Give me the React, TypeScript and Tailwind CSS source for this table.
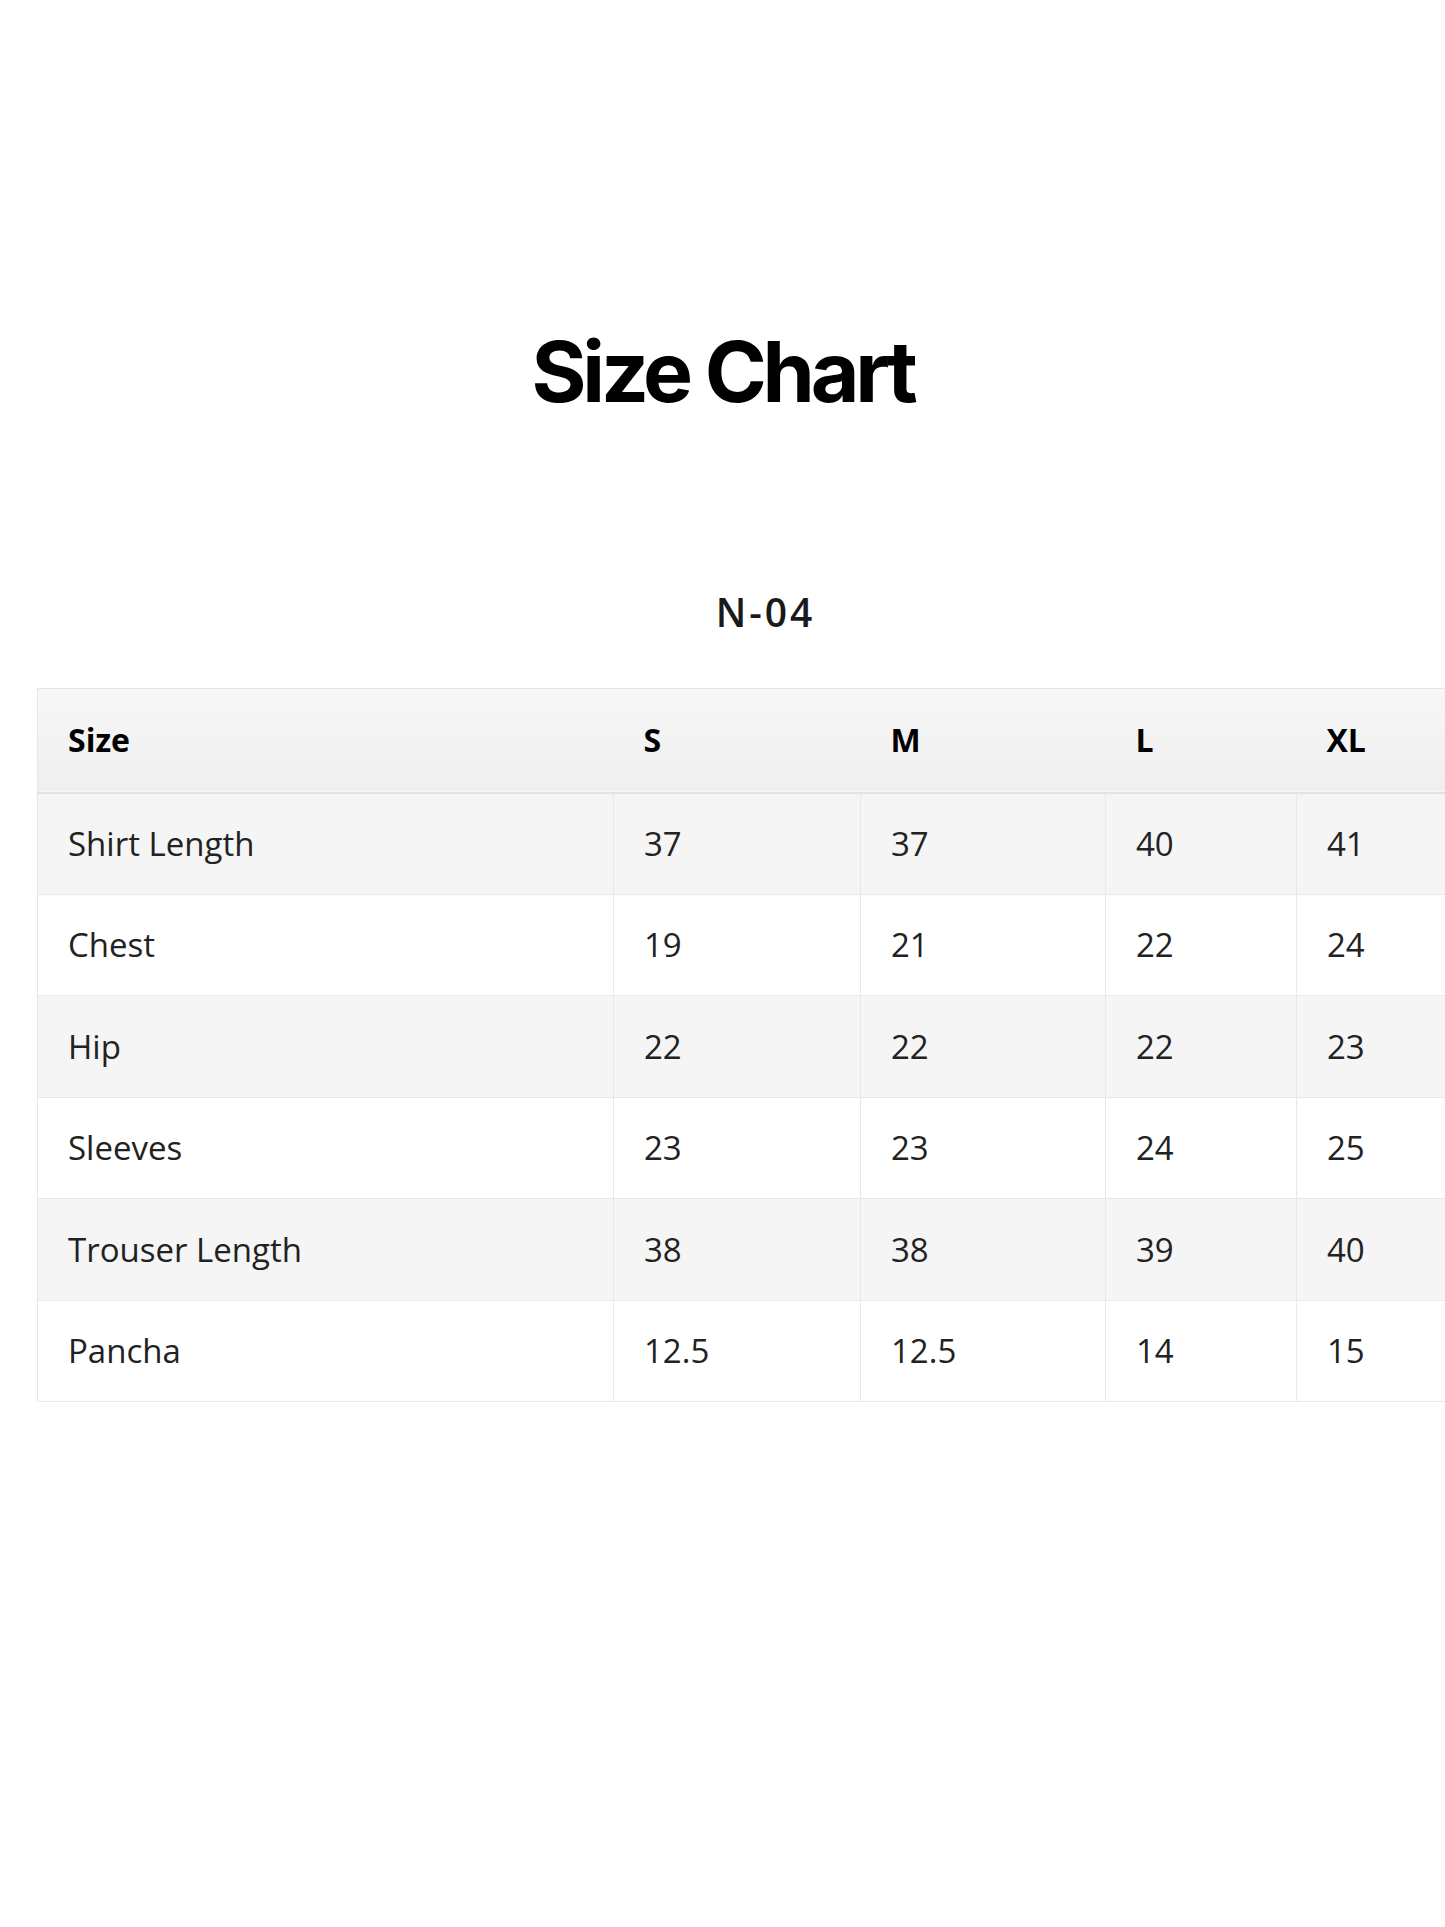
import React from "react";

const rows = [
    { label: "Shirt Length", values: ["37", "37", "40", "41"] },
    { label: "Chest", values: ["19", "21", "22", "24"] },
    { label: "Hip", values: ["22", "22", "22", "23"] },
    { label: "Sleeves", values: ["23", "23", "24", "25"] },
    { label: "Trouser Length", values: ["38", "38", "39", "40"] },
    { label: "Pancha", values: ["12.5", "12.5", "14", "15"] },
];

const sizes = ["S", "M", "L", "XL"];

export default function App() {
    return (
        <div className="min-h-[1927px] w-full overflow-hidden bg-white">
            <h1 className="pt-[322px] text-center text-[84px] font-bold leading-[100px] tracking-[-4.2px] text-black [font-family:Inter,sans-serif]">
                Size Chart
            </h1>

            <div className="mt-[162px] pl-[86px] text-center text-[39px] font-semibold leading-[56px] tracking-[3px] text-[#1a1a1a] [font-family:'Open_Sans',sans-serif]">
                N-04
            </div>

            <div className="mt-[48px] ml-[37px] w-[1480px] [font-family:'Open_Sans',sans-serif]">
                <table className="w-full table-fixed border-collapse border border-[#e6e6e6]">
                    <colgroup>
                        <col className="w-[576px]" />
                        <col className="w-[247px]" />
                        <col className="w-[245px]" />
                        <col className="w-[191px]" />
                        <col />
                    </colgroup>
                    <thead>
                        <tr className="h-[104px] bg-gradient-to-b from-[#f7f7f7] to-[#efefef] border-b-2 border-[#e2e2e2]">
                            <th className="pl-[30px] text-left text-[32px] font-bold text-black">Size</th>
                            {sizes.map((s) => (
                                <th key={s} className="pl-[30px] text-left text-[32px] font-bold text-black">
                                    {s}
                                </th>
                            ))}
                        </tr>
                    </thead>
                    <tbody>
                        {rows.map((row, i) => (
                            <tr
                                key={row.label}
                                className={
                                    "h-[101.5px] border-b border-[#e8e8e8] " +
                                    (i % 2 === 0 ? "bg-[#f5f5f5]" : "bg-white")
                                }
                            >
                                <td className="pl-[30px] text-[33px] text-[#222]">{row.label}</td>
                                {row.values.map((v, j) => (
                                    <td
                                        key={j}
                                        className="border-l border-[#e8e8e8] pl-[30px] text-[33px] text-[#222]"
                                    >
                                        {v}
                                    </td>
                                ))}
                            </tr>
                        ))}
                    </tbody>
                </table>
            </div>
        </div>
    );
}
